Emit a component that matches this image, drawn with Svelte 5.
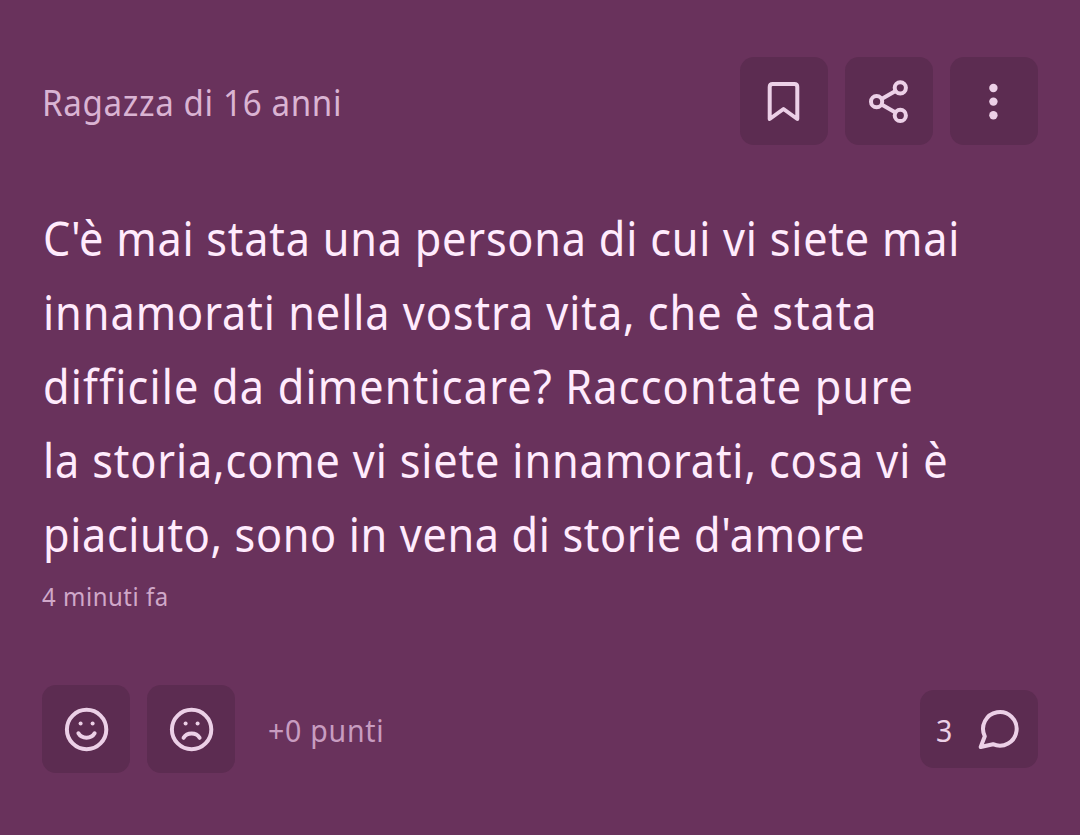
<script>
    const author = "Ragazza di 16 anni";
    const time = "4 minuti fa";
    const comments = 3;

    let points = $state(0);

    const lines = [
        { text: "C'è mai stata una persona di cui vi siete mai", spacing: 0.84 },
        { text: "innamorati nella vostra vita, che è stata", spacing: 1.03 },
        { text: "difficile da dimenticare? Raccontate pure", spacing: 1.27 },
        { text: "la storia,come vi siete innamorati, cosa vi è", spacing: 0.93 },
        { text: "piaciuto, sono in vena di storie d'amore", spacing: 0.69 }
    ];
</script>

<article class="post">
    <header>
        <span class="author condensed">{author}</span>
        <div class="actions">
            <button aria-label="Salva">
                <svg viewBox="0 0 88 88">
                    <path d="M32.7 27H54.3Q57.3 27 57.3 30V62L43.5 52L29.7 62V30Q29.7 27 32.7 27Z" />
                </svg>
            </button>
            <button aria-label="Condividi">
                <svg viewBox="0 0 88 88">
                    <path d="M37 41.7L50.5 34M37 47.7L50.5 55.4" />
                    <circle cx="31.6" cy="44.7" r="5.6" />
                    <circle cx="55.3" cy="30.8" r="5.6" />
                    <circle cx="55.3" cy="58.4" r="5.6" />
                </svg>
            </button>
            <button aria-label="Altro">
                <svg viewBox="0 0 88 88">
                    <circle class="dot" cx="43.4" cy="31" r="4.2" />
                    <circle class="dot" cx="43.4" cy="44.6" r="4.2" />
                    <circle class="dot" cx="43.4" cy="58.2" r="4.2" />
                </svg>
            </button>
        </div>
    </header>

    <p class="question">
        {#each lines as line}
            <span class="condensed" style="letter-spacing: {line.spacing}px">{line.text}</span>
        {/each}
    </p>
    <time class="condensed">{time}</time>

    <footer>
        <div class="votes">
            <button aria-label="Mi piace" onclick={() => points++}>
                <svg viewBox="0 0 88 88">
                    <circle cx="44.6" cy="44.5" r="19.7" />
                    <circle class="dot" cx="38.6" cy="38.6" r="2" />
                    <circle class="dot" cx="50.6" cy="38.6" r="2" />
                    <path d="M36.4 48.3C39.8 54.2 49.2 54.2 52.6 48.3" />
                </svg>
            </button>
            <button aria-label="Non mi piace" onclick={() => points--}>
                <svg viewBox="0 0 88 88">
                    <circle cx="44.6" cy="44.5" r="19.7" />
                    <circle class="dot" cx="38.6" cy="38.6" r="2" />
                    <circle class="dot" cx="50.6" cy="38.6" r="2" />
                    <path d="M36.6 52.8C40 47.2 49.2 47.2 52.6 52.8" />
                </svg>
            </button>
            <span class="points condensed">{points >= 0 ? "+" : ""}{points} punti</span>
        </div>
        <button class="comments" aria-label="Commenti">
            <span class="condensed">{comments}</span>
            <svg viewBox="0 0 44 44">
                <path d="M3.7 40L7.8 29.3A16.8 16.8 0 1 1 16 37.2Z" />
            </svg>
        </button>
    </footer>
</article>

<style>
    :global(body) {
        margin: 0;
        background: #69325c;
    }

    .post {
        box-sizing: border-box;
        height: 835px;
        padding: 57px 42px 0;
        overflow: hidden;
        background: #69325c;
        color: #ffebfd;
        font-family: "Noto Sans", sans-serif;
    }

    header,
    footer,
    .actions,
    .votes {
        display: flex;
        align-items: center;
    }

    header,
    footer {
        justify-content: space-between;
    }

    .actions,
    .votes {
        gap: 17px;
    }

    .condensed {
        display: block;
        transform: scaleX(0.92);
        transform-origin: left;
        white-space: nowrap;
    }

    .author {
        padding-top: 3px;
        color: #dab4d3;
        font-size: 36px;
        letter-spacing: 0.7px;
    }

    button {
        width: 88px;
        height: 88px;
        padding: 0;
        border: none;
        border-radius: 14px;
        background: #5c2c51;
        color: #ecd0e7;
        font: inherit;
    }

    svg {
        display: block;
        fill: none;
        stroke: currentColor;
        stroke-width: 4;
        stroke-linecap: round;
        stroke-linejoin: round;
    }

    .dot {
        fill: currentColor;
        stroke: none;
    }

    .question {
        margin: 56px 0 0 1px;
        font-size: 47px;
        line-height: 74px;
    }

    time {
        height: 42px;
        padding-top: 4px;
        color: #d0a8c9;
        font-size: 26px;
        letter-spacing: 0.6px;
        line-height: 42px;
    }

    footer {
        margin-top: 68px;
    }

    .points {
        margin-left: 16px;
        padding-top: 2px;
        color: #c89cc0;
        font-size: 31px;
        letter-spacing: 0.8px;
    }

    .comments {
        display: flex;
        align-items: center;
        justify-content: space-between;
        box-sizing: border-box;
        width: 118px;
        height: 78px;
        padding: 0 17px 0 16px;
        font-size: 31px;
    }

    .comments span {
        padding-top: 2px;
    }

    .comments svg {
        width: 44px;
        height: 44px;
    }
</style>
